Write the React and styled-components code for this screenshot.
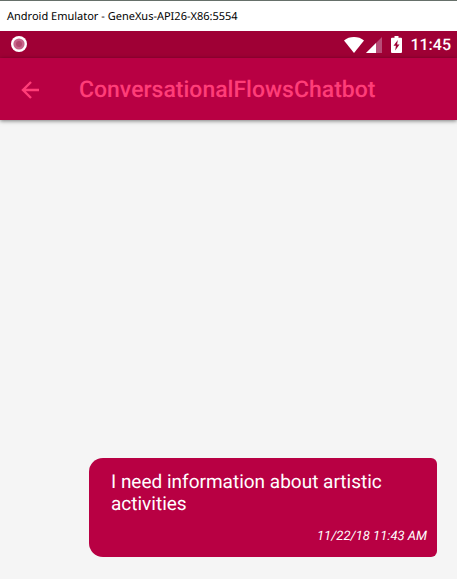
import React from "react";
import styled, { createGlobalStyle } from "styled-components";

const GlobalStyle = createGlobalStyle`
  * { box-sizing: border-box; }
  body {
    margin: 0;
    background: #f5f5f5;
    font-family: Roboto, sans-serif;
    text-rendering: geometricPrecision;
  }
`;

const Screen = styled.div`
  min-height: 100vh;
  display: flex;
  flex-direction: column;
`;

const WindowTitle = styled.div`
  height: 31px;
  padding: 1px 7px 0;
  border-top: 1px solid #66706a;
  background: #fff;
  color: #000;
  font: 11px/30px "Noto Sans", sans-serif;
  white-space: nowrap;
`;

const StatusBar = styled.div`
  height: 27px;
  padding: 0 6px 0 10px;
  display: flex;
  align-items: center;
  justify-content: space-between;
  background: #9f0035;
  color: #fff;
`;

const StatusIcons = styled.div`
  display: flex;
  align-items: center;
`;

const StatusIcon = styled.svg`
  display: block;
  flex: none;
  margin-right: ${(p) => p.$gap || 0}px;
`;

const Clock = styled.time`
  font-size: 16px;
  line-height: 27px;
  font-weight: 500;
`;

const AppBar = styled.header`
  height: 62px;
  padding: 2px 16px 0;
  display: flex;
  align-items: center;
  gap: 35px;
  background: #b80043;
  color: #ff3d78;
  box-shadow: 0 1px 4px rgba(0, 0, 0, 0.5);
`;

const BackButton = styled.button`
  width: 28px;
  height: 28px;
  padding: 0;
  border: 0;
  background: none;
  color: inherit;
  display: grid;
  place-items: center;
`;

const Title = styled.h1`
  margin: 0;
  font-size: 23px;
  line-height: 28px;
  font-weight: 500;
`;

const Conversation = styled.main`
  flex: 1;
  display: flex;
  flex-direction: column;
  justify-content: flex-end;
  padding: 20px 20px 22px 89px;
`;

const Message = styled.article`
  display: flex;
  flex-direction: column;
  gap: 12px;
  padding: 13px 10px 10px 22px;
  border-radius: 14px 6px 6px 14px;
  background: #b80043;
  color: #fff;
`;

const MessageText = styled.p`
  margin: 0;
  padding-right: 40px;
  font-size: 19px;
  line-height: 22px;
`;

const Timestamp = styled.time`
  align-self: flex-end;
  font-size: 13px;
  line-height: 20px;
  font-style: italic;
`;

export default function App() {
  return (
    <Screen>
      <GlobalStyle />
      <WindowTitle>Android Emulator - GeneXus-API26-X86:5554</WindowTitle>
      <StatusBar>
        <StatusIcon width="18" height="18" viewBox="0 0 18 18" aria-hidden="true">
          <circle cx="9" cy="8" r="8" fill="#fff" />
          <circle cx="9" cy="8" r="5.6" fill="#c7658a" />
          <circle cx="9" cy="8" r="3" fill="#b3476e" />
        </StatusIcon>
        <StatusIcons>
          <StatusIcon $gap={2} width="20" height="16" viewBox="0 0 20 16" aria-label="Wi-Fi">
            <path d="M0 3.4C2.8 1.2 6.2 0 10 0s7.2 1.2 10 3.4L10 16z" fill="#fff" />
          </StatusIcon>
          <StatusIcon $gap={9} width="16" height="16" viewBox="0 0 16 16" aria-label="Signal">
            <path d="M16 0v16H0z" fill="#b84c77" />
            <path d="M10 6v10H0z" fill="#fff" />
          </StatusIcon>
          <StatusIcon $gap={8} width="11" height="17" viewBox="0 0 11 17" aria-label="Battery charging">
            <path d="M3.5 0h4v1.7H10a1 1 0 0 1 1 1V16a1 1 0 0 1-1 1H1a1 1 0 0 1-1-1V2.7a1 1 0 0 1 1-1h2.5z" fill="#fff" />
            <path d="M6.8 4L2.5 9.800h2.400L4.200 14.500L8.500 8.500H6.100z" fill="#9f0035" />
          </StatusIcon>
          <Clock>11:45</Clock>
        </StatusIcons>
      </StatusBar>
      <AppBar>
        <BackButton aria-label="Back">
          <svg width="18" height="18" viewBox="0 0 18 18" fill="none" stroke="currentColor" strokeWidth="2.4" aria-hidden="true">
            <path d="M18 9H2M10 1L2 9l8 8" />
          </svg>
        </BackButton>
        <Title>ConversationalFlowsChatbot</Title>
      </AppBar>
      <Conversation>
        <Message>
          <MessageText>I need information about artistic activities</MessageText>
          <Timestamp>11/22/18 11:43 AM</Timestamp>
        </Message>
      </Conversation>
    </Screen>
  );
}
